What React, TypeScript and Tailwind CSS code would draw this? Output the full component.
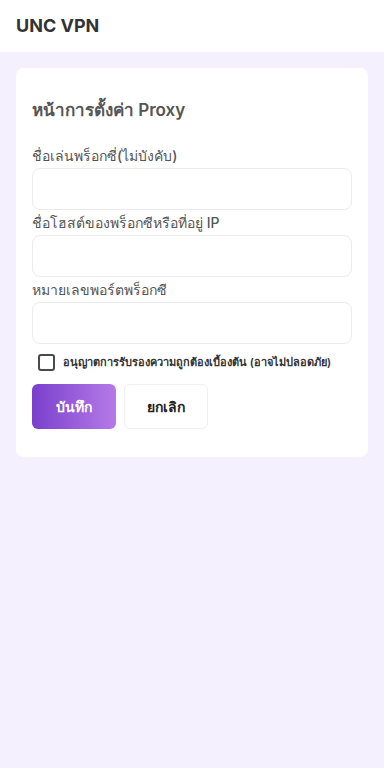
import React from "react";

const Field = ({ label }: { label: string }) => (
  <div className="flex flex-col">
    <label className="text-[14px] leading-[20px] font-medium text-[#555] mb-[2px]">{label}</label>
    <input
      type="text"
      className="h-[42px] w-full rounded-[8px] border border-[#ebebeb] bg-white px-3 outline-none"
    />
  </div>
);

const App = () => {
  return (
    <div
      className="min-h-[768px] flex flex-col bg-[#f5f0fe]"
      style={{ fontFamily: 'Inter, "Noto Sans", sans-serif' }}
    >
      <header className="h-[52px] bg-white flex items-center px-4">
        <h1 className="text-[18px] leading-[24px] font-bold text-[#333]">UNC VPN</h1>
      </header>
      <main className="flex-1 px-4 pt-4">
        <div className="bg-white rounded-[8px] px-4 pt-[28px] pb-[28px]">
          <h2 className="text-[17px] leading-[28px] font-semibold text-[#555] mb-[22px]">หน้าการตั้งค่า Proxy</h2>
          <div className="flex flex-col gap-[3px]">
            <Field label="ชื่อเล่นพร็อกซี่(ไม่บังคับ)" />
            <Field label="ชื่อโฮสต์ของพร็อกซีหรือที่อยู่ IP" />
            <Field label="หมายเลขพอร์ตพร็อกซี" />
          </div>
          <label className="flex items-center gap-2 mt-[10px] px-[6px] h-[17px]">
            <span className="w-[17px] h-[17px] border-2 border-[#4a4a4a] rounded-[3px] shrink-0" />
            <span className="text-[11px] leading-[17px] font-semibold text-[#333] whitespace-nowrap">
              อนุญาตการรับรองความถูกต้องเบื้องต้น (อาจไม่ปลอดภัย)
            </span>
          </label>
          <div className="flex gap-2 mt-[13px]">
            <button className="w-[84px] h-[45px] rounded-[6px] bg-gradient-to-r from-[#7a3fcc] to-[#b779e9] text-white text-[14px] font-semibold">
              บันทึก
            </button>
            <button className="w-[84px] h-[45px] rounded-[6px] bg-white border border-[#f0f0f0] text-[#222] text-[14px] font-semibold">
              ยกเลิก
            </button>
          </div>
        </div>
      </main>
    </div>
  );
};

export default App;
